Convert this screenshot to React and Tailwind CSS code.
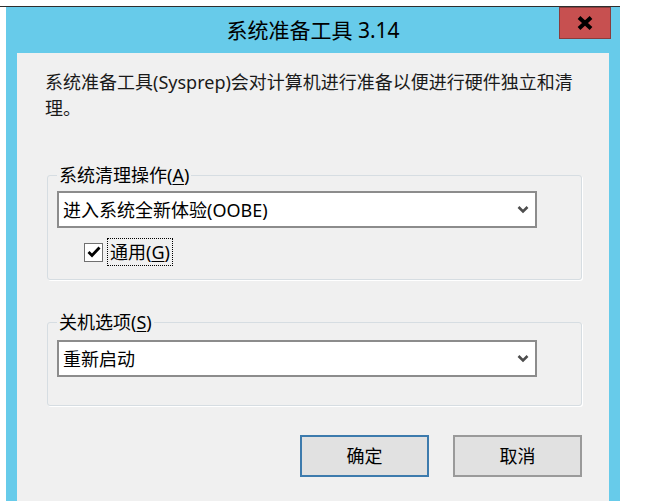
import React from "react";

const FONT = { fontFamily: '"Noto Sans", "Noto Sans CJK SC", sans-serif' };

function Chevron() {
  return (
    <svg width="12" height="9" viewBox="0 0 12 9" className="block">
      <path d="M1.5 2 L6 6.5 L10.5 2" fill="none" stroke="#4d4d4d" strokeWidth="2.6" />
    </svg>
  );
}

function Combo({ text }) {
  return (
    <div className="w-[480px] h-[37px] border-2 border-[#8c8c8c] bg-white flex items-center justify-between pl-[4px] pr-[6px]">
      <span className="whitespace-nowrap">{text}</span>
      <Chevron />
    </div>
  );
}

export default function App() {
  return (
    <div className="w-[667px] h-[501px] bg-white overflow-hidden text-black" style={FONT}>
      <div className="w-[620px] h-full pt-[6px]">
        <div className="h-full border-t border-[#2e2e2e] pl-[6px]">
          <div className="h-full bg-[#67cbea] flex flex-col px-[11px]">
            {/* Title bar */}
            <div className="relative h-[46px] flex items-center justify-center">
              <span className="text-[21px] leading-none whitespace-nowrap">系统准备工具 3.14</span>
              <div className="absolute right-[-2px] top-0 w-[52px] h-[32px] bg-[#c75050] border border-[#8a3c3c] flex items-center justify-center">
                <svg width="16" height="14" viewBox="0 0 16 14">
                  <path d="M2 1.5 L14 12.5 M14 1.5 L2 12.5" stroke="#000" strokeWidth="4" />
                </svg>
              </div>
            </div>

            {/* Client */}
            <div className="flex-1 bg-[#f0f0f0] pl-[28px] pt-[16px] text-[18px] leading-[26px]">
              <p className="whitespace-nowrap text-[#1a1a1a]">
                系统准备工具(Sysprep)会对计算机进行准备以便进行硬件独立和清
                <br />
                理。
              </p>

              <fieldset className="ml-[2px] mt-[41px] w-[535px] border border-[#d6dde2] rounded-[3px] shadow-[1px_1px_0_#ffffff] pl-[9px] pb-[13px]">
                <legend className="px-[2px] leading-[26px]">
                  系统清理操作(<span className="underline underline-offset-2">A</span>)
                </legend>
                <div className="mt-[3px]">
                  <Combo text="进入系统全新体验(OOBE)" />
                </div>
                <div className="mt-[10px] ml-[27px] flex items-center gap-[4px]">
                  <div className="w-[19px] h-[19px] border border-[#707070] bg-white flex items-center justify-center">
                    <svg width="14" height="12" viewBox="0 0 14 12">
                      <path d="M1.5 6 L5 9.5 L12.5 1.5" fill="none" stroke="#000" strokeWidth="2.8" />
                    </svg>
                  </div>
                  <div className="h-[28px] border border-dotted border-black px-[2px] flex items-center">
                    通用(<span className="underline underline-offset-2">G</span>)
                  </div>
                </div>
              </fieldset>

              <fieldset className="ml-[2px] mt-[29px] w-[535px] border border-[#d6dde2] rounded-[3px] shadow-[1px_1px_0_#ffffff] pl-[9px] pb-[28px]">
                <legend className="px-[2px] leading-[26px]">
                  关机选项(<span className="underline underline-offset-2">S</span>)
                </legend>
                <div className="mt-[5px]">
                  <Combo text="重新启动" />
                </div>
              </fieldset>

              <div className="mt-[29px] w-[537px] flex justify-end gap-[24px]">
                <div className="w-[129px] h-[42px] bg-[#e1e1e1] border-2 border-[#3d7bad] flex items-center justify-center">
                  确定
                </div>
                <div className="w-[129px] h-[42px] bg-[#e1e1e1] border-2 border-[#9a9a9a] flex items-center justify-center">
                  取消
                </div>
              </div>
            </div>
          </div>
        </div>
      </div>
    </div>
  );
}
